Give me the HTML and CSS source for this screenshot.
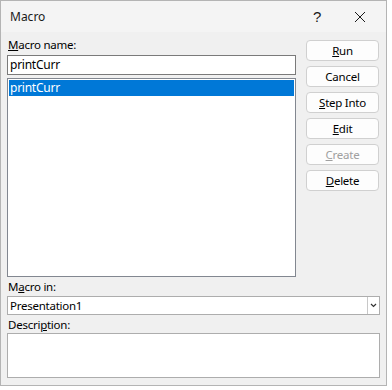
FILE: index.html
```html
<!DOCTYPE html>
<html lang="en">
<head>
    <meta charset="UTF-8">
    <meta name="viewport" content="width=device-width, initial-scale=1.0">
    <title>Macro</title>
    <link rel="stylesheet" href="styles.css">
</head>
<body>
    <div class="dialog">
        <!-- Title Bar -->
        <div class="titlebar">
            <span class="title">Macro</span>
            <span class="help">?</span>
            <span class="close">
                <svg width="12" height="12" viewBox="0 0 12 12">
                    <path d="M1 1 L11 11 M11 1 L1 11" stroke="#1a1a1a" stroke-width="1" fill="none"/>
                </svg>
            </span>
        </div>

        <!-- Dialog Content -->
        <div class="content">
            <div class="top">
                <div class="left">
                    <div class="label"><u>M</u>acro name:</div>
                    <div class="textbox">printCurr</div>
                    <div class="listbox">
                        <div class="item selected">printCurr</div>
                    </div>
                </div>

                <div class="buttons">
                    <button class="button"><u>R</u>un</button>
                    <button class="button">Cancel</button>
                    <button class="button"><u>S</u>tep Into</button>
                    <button class="button"><u>E</u>dit</button>
                    <button class="button disabled"><u>C</u>reate</button>
                    <button class="button"><u>D</u>elete</button>
                </div>
            </div>

            <div class="label label-in">M<u>a</u>cro in:</div>
            <div class="select">
                <span class="select-value">Presentation1</span>
                <span class="select-arrow">
                    <svg width="7" height="5" viewBox="0 0 7 5">
                        <path d="M1 1 L3.5 3.5 L6 1" stroke="#333" stroke-width="1.2" fill="none"/>
                    </svg>
                </span>
            </div>

            <div class="label label-desc">Descri<u>p</u>tion:</div>
            <div class="description"></div>
        </div>
    </div>
</body>
</html>
```

FILE: styles.css
```css
/* General Styling */
body {
    margin: 0;
    padding: 0;
    font-family: 'Noto Sans', 'Liberation Sans', sans-serif;
    font-size: 11.5px;
    letter-spacing: -0.25px;
    color: #000;
    background: #fff;
}

/* Dialog Window */
.dialog {
    box-sizing: border-box;
    width: 387px;
    height: 386px;
    border: 1px solid #b4b4b4;
    background: #f0f0f0;
}

/* Title Bar */
.titlebar {
    height: 31px;
    display: flex;
    align-items: center;
    background: #f4f4f4;
}
.title {
    margin-left: 9px;
    flex: 1;
    font-size: 12px;
    letter-spacing: 0;
    color: #1a1a1a;
}
.help {
    width: 10px;
    font-size: 15px;
    font-family: 'Liberation Sans', sans-serif;
    color: #1a1a1a;
    margin-right: 31px;
}
.close {
    display: flex;
    margin-right: 20px;
}

/* Content */
.content {
    padding: 5px 0 0 6px;
}
.top {
    display: flex;
    gap: 10px;
}
.left {
    width: 289px;
}
.label {
    line-height: 16px;
    height: 16px;
    padding-left: 1px;
}

/* Text Box */
.textbox {
    box-sizing: border-box;
    height: 20px;
    margin-top: 2px;
    border: 1px solid #7a7a7a;
    background: #fff;
    padding-left: 2px;
    font-size: 12px;
    line-height: 18px;
}

/* List Box */
.listbox {
    box-sizing: border-box;
    height: 199px;
    margin-top: 3px;
    border: 1px solid #828790;
    background: #fff;
    padding: 1px;
}
.item {
    height: 16px;
    line-height: 15px;
    padding-left: 1px;
    font-size: 12px;
}
.item.selected {
    background: #0078d7;
    color: #fff;
}

/* Buttons */
.buttons {
    display: flex;
    flex-direction: column;
    gap: 5px;
    padding-top: 3px;
}
.button {
    box-sizing: border-box;
    width: 73px;
    height: 21px;
    padding: 0;
    border: 1px solid #d0d0d0;
    border-radius: 4px;
    background: #fdfdfd;
    font-family: inherit;
    font-size: 11.5px;
    letter-spacing: -0.25px;
    color: #000;
    line-height: 18px;
}
.button.disabled {
    color: #a0a0a0;
}

/* Macro In */
.label-in {
    margin-top: 2px;
}
.select {
    box-sizing: border-box;
    display: flex;
    width: 373px;
    height: 19px;
    margin-top: 1px;
    border: 1px solid #adadad;
    background: #fff;
}
.select-value {
    flex: 1;
    padding-left: 2px;
    line-height: 17px;
}
.select-arrow {
    width: 11px;
    border-left: 1px solid #c8c8c8;
    display: flex;
    align-items: center;
    justify-content: center;
}

/* Description */
.label-desc {
    margin-top: 2px;
}
.description {
    box-sizing: border-box;
    width: 373px;
    height: 45px;
    border: 1px solid #adadad;
    background: #fff;
}
```
